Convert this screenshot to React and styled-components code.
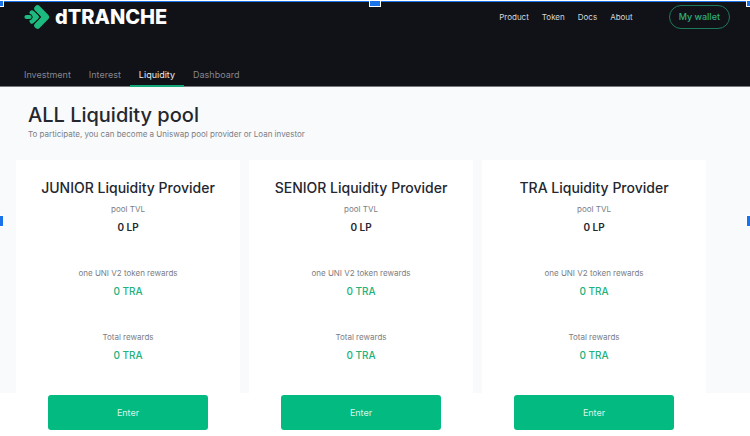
import React from "react";
import styled, { createGlobalStyle } from "styled-components";

const GlobalStyle = createGlobalStyle`
  *, *::before, *::after { box-sizing: border-box; }
  body {
    margin: 0;
    background: #ffffff;
    color: #24272e;
    font-family: Inter, "Liberation Sans", sans-serif;
  }
  h1, h2, p, dl, dt, dd { margin: 0; }
  a { color: inherit; text-decoration: none; }
  button { font-family: inherit; cursor: pointer; }
`;

const Page = styled.div`
  position: relative;
`;

const Header = styled.header`
  background: #101217;
  border-bottom: 1px solid #77787b;
`;

const TopBar = styled.div`
  display: flex;
  align-items: center;
  height: 34px;
  padding: 0 20px 0 24px;
`;

const Brand = styled.a`
  display: flex;
  align-items: center;
  gap: 5px;
  margin-right: auto;
  color: #ffffff;
  font-size: 20px;
  font-weight: 800;
  line-height: 24px;
`;

const LogoMark = styled.svg`
  width: 26px;
  height: 24px;
`;

const SiteNav = styled.nav`
  display: flex;
  gap: 13px;
  margin-right: 36px;
  color: #d6d7da;
  font-size: 8px;
  line-height: 12px;
`;

const WalletButton = styled.button`
  height: 24px;
  padding: 0 9px;
  border: 1px solid #1d7a58;
  border-radius: 12px;
  background: transparent;
  color: #2fae7c;
  font-size: 9px;
  font-weight: 500;
  line-height: 20px;
`;

const Tabs = styled.nav`
  display: flex;
  padding: 29px 15px 0;
`;

const Tab = styled.a`
  height: 24px;
  margin-bottom: -1px;
  padding: 5px 9px 0;
  border-bottom: 2px solid ${(p) => (p.$active ? "#14a878" : "transparent")};
  color: ${(p) => (p.$active ? "#ececee" : "#85868f")};
  font-size: 9px;
  line-height: 14px;
`;

const Main = styled.main`
  padding: 15px 44px 0 16px;
  background: linear-gradient(#f9fafc, #f9fafc) 0 0 / 100% calc(100% - 43px) no-repeat;
`;

const Intro = styled.section`
  padding: 0 12px 20px;
`;

const Title = styled.h1`
  font-size: 20px;
  font-weight: 500;
  line-height: 26px;
`;

const Subtitle = styled.p`
  color: #7b7e85;
  font-size: 8px;
  line-height: 12px;
`;

const Cards = styled.section`
  display: grid;
  grid-template-columns: repeat(3, 1fr);
  gap: 9px;
`;

const Card = styled.article`
  padding: 18px 32px 6px;
  background: #ffffff;
  text-align: center;
`;

const CardTitle = styled.h2`
  margin: 0 -24px;
  font-size: 14px;
  font-weight: 500;
  line-height: 20px;
`;

const Stats = styled.dl`
  display: grid;
  gap: 33px;
  padding: 5px 0 33px;
`;

const StatLabel = styled.dt`
  color: #7b7e85;
  font-size: 8px;
  line-height: 12px;
`;

const StatValue = styled.dd`
  padding-top: 5px;
  color: ${(p) => (p.$accent ? "#23b17c" : "#24272e")};
  font-size: 10px;
  font-weight: ${(p) => (p.$accent ? 500 : 600)};
  line-height: 14px;
`;

const EnterButton = styled.button`
  width: 100%;
  height: 35px;
  border: 0;
  border-radius: 3px;
  background: #03bb80;
  color: #d9f5ea;
  font-size: 9px;
`;

const SelectionLayer = styled.div`
  position: absolute;
  inset: 0;
  overflow: hidden;
  border-top: 1px solid #ffffff;
  pointer-events: none;
`;

const SelectionFrame = styled.div`
  position: absolute;
  inset: 0 -2px -6px;
  border-top: 1px solid #1a73e8;
`;

const Handle = styled.span`
  position: absolute;
  top: ${(p) => p.$top};
  left: ${(p) => p.$left};
  width: 12px;
  height: 12px;
  margin: -7px 0 0 -6px;
  border: 1px solid #ffffff;
  background: #1a73e8;
`;

const siteLinks = ["Product", "Token", "Docs", "About"];
const tabs = ["Investment", "Interest", "Liquidity", "Dashboard"];
const pools = ["JUNIOR", "SENIOR", "TRA"];
const stats = [
  { label: "pool TVL", value: "0 LP", accent: false },
  { label: "one UNI V2 token rewards", value: "0 TRA", accent: true },
  { label: "Total rewards", value: "0 TRA", accent: true },
];
const handles = [
  ["0", "0"],
  ["0", "50%"],
  ["0", "100%"],
  ["50%", "0"],
  ["50%", "100%"],
];

function Logo() {
  return (
    <LogoMark viewBox="0 0 26 24" aria-hidden="true">
      <g fill="none" strokeLinecap="round" strokeLinejoin="round">
        <path d="M13.500 3.500 21.800 12 13.500 20.500" stroke="#1dba80" strokeWidth="6.500" />
        <path d="M8 7.800 12.500 12 8 16.200" stroke="#101217" strokeWidth="6.800" />
        <path d="M8 7.800 12.500 12 8 16.200" stroke="#1dba80" strokeWidth="5" />
        <path d="M2.500 12H5.500" stroke="#101217" strokeWidth="5.800" />
        <path d="M2.500 12H5.500" stroke="#1dba80" strokeWidth="4.200" />
      </g>
    </LogoMark>
  );
}

export default function App() {
  return (
    <>
      <GlobalStyle />
      <Page>
        <Header>
          <TopBar>
            <Brand href="#home">
              <Logo />
              dTRANCHE
            </Brand>
            <SiteNav aria-label="Site">
              {siteLinks.map((name) => (
                <a key={name} href={`#${name.toLowerCase()}`}>{name}</a>
              ))}
            </SiteNav>
            <WalletButton type="button">My wallet</WalletButton>
          </TopBar>
          <Tabs aria-label="Sections">
            {tabs.map((name) => (
              <Tab
                key={name}
                href={`#${name.toLowerCase()}`}
                $active={name === "Liquidity"}
                aria-current={name === "Liquidity" ? "page" : undefined}
              >
                {name}
              </Tab>
            ))}
          </Tabs>
        </Header>
        <Main>
          <Intro>
            <Title>ALL Liquidity pool</Title>
            <Subtitle>
              To participate, you can become a Uniswap pool provider or Loan investor
            </Subtitle>
          </Intro>
          <Cards>
            {pools.map((pool) => (
              <Card key={pool}>
                <CardTitle>{pool} Liquidity Provider</CardTitle>
                <Stats>
                  {stats.map((stat) => (
                    <div key={stat.label}>
                      <StatLabel>{stat.label}</StatLabel>
                      <StatValue $accent={stat.accent}>{stat.value}</StatValue>
                    </div>
                  ))}
                </Stats>
                <EnterButton type="button">Enter</EnterButton>
              </Card>
            ))}
          </Cards>
        </Main>
        <SelectionLayer aria-hidden="true">
          <SelectionFrame>
            {handles.map(([top, left]) => (
              <Handle key={`${top}-${left}`} $top={top} $left={left} />
            ))}
          </SelectionFrame>
        </SelectionLayer>
      </Page>
    </>
  );
}
